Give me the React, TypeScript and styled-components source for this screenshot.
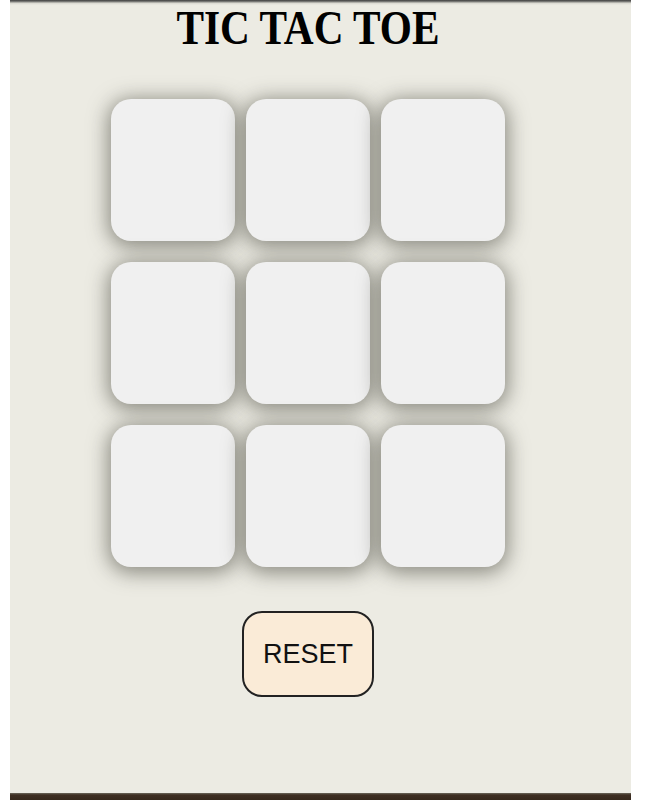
import React, { useState } from "react";
import styled, { createGlobalStyle } from "styled-components";

const GlobalStyle = createGlobalStyle`
  html, body { margin: 0; padding: 0; background: #ffffff; }
  body { width: 650px; height: 800px; overflow: hidden; }
`;

const Page = styled.div`
  margin-left: 10px;
  width: 621px;
  display: flex;
  flex-direction: column;
`;

const Panel = styled.main`
  height: 793px;
  box-sizing: border-box;
  padding: 2px 25px 0 0;
  background: linear-gradient(to bottom, #3c3c3c 0px, #8a8a86 2px, #d8d7cf 3px, #ecebe3 5px);
  display: flex;
  flex-direction: column;
  align-items: center;
`;

const Footer = styled.div`
  height: 7px;
  background: linear-gradient(to bottom, #6b675c 0px, #3e2e22 2px, #36281c 7px);
`;

const Title = styled.h1`
  margin: 0;
  font-family: "Liberation Serif", "Times New Roman", serif;
  font-weight: bold;
  font-size: 48px;
  line-height: 52px;
  color: #000;
  transform: scaleX(0.86);
`;

const Board = styled.div`
  margin-top: 45px;
  display: grid;
  grid-template-columns: repeat(3, 124px);
  grid-auto-rows: 142px;
  column-gap: 11px;
  row-gap: 21px;
`;

const Cell = styled.button`
  border: none;
  padding: 0;
  border-radius: 20px;
  background: #f0f0f0;
  box-shadow: 0 3px 20px 3px rgba(60, 60, 50, 0.55);
  font-family: "Liberation Sans", Arial, sans-serif;
  font-size: 60px;
  cursor: pointer;
`;

const ResetButton = styled.button`
  margin-top: 44px;
  width: 132px;
  height: 86px;
  box-sizing: border-box;
  border: 2px solid #222;
  border-radius: 20px;
  background: #faebd7;
  font-family: "Liberation Sans", Arial, sans-serif;
  font-size: 27px;
  color: #111;
  cursor: pointer;
`;

export default function App() {
  const [cells, setCells] = useState<string[]>(Array(9).fill(""));
  const [turn, setTurn] = useState<"X" | "O">("X");

  const play = (i: number) => {
    if (cells[i]) return;
    const next = cells.slice();
    next[i] = turn;
    setCells(next);
    setTurn(turn === "X" ? "O" : "X");
  };

  return (
    <>
      <GlobalStyle />
      <Page>
        <Panel>
          <Title>TIC TAC TOE</Title>
          <Board>
            {cells.map((c, i) => (
              <Cell key={i} onClick={() => play(i)}>
                {c}
              </Cell>
            ))}
          </Board>
          <ResetButton
            onClick={() => {
              setCells(Array(9).fill(""));
              setTurn("X");
            }}
          >
            RESET
          </ResetButton>
        </Panel>
        <Footer />
      </Page>
    </>
  );
}
